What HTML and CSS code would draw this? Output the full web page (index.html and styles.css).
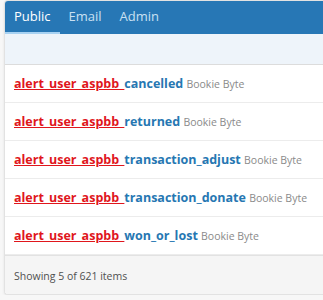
FILE: index.html
```html
<!DOCTYPE html>
<html lang="en">
<head>
    <meta charset="UTF-8">
    <title>Alerts</title>
    <link rel="stylesheet" href="styles.css">
</head>
<body>
    <div class="panel">
        <div class="tabs">
            <span class="tab active">Public</span>
            <span class="tab">Email</span>
            <span class="tab">Admin</span>
        </div>
        <div class="filter-bar"></div>
        <div class="rows">
            <div class="row"><span class="prefix">alert_user_aspbb_</span><span class="suffix">cancelled</span> <span class="owner">Bookie Byte</span></div>
            <div class="row"><span class="prefix">alert_user_aspbb_</span><span class="suffix">returned</span> <span class="owner">Bookie Byte</span></div>
            <div class="row"><span class="prefix">alert_user_aspbb_</span><span class="suffix">transaction_adjust</span> <span class="owner">Bookie Byte</span></div>
            <div class="row"><span class="prefix">alert_user_aspbb_</span><span class="suffix">transaction_donate</span> <span class="owner">Bookie Byte</span></div>
            <div class="row"><span class="prefix">alert_user_aspbb_</span><span class="suffix">won_or_lost</span> <span class="owner">Bookie Byte</span></div>
        </div>
        <div class="footer">Showing 5 of 621 items</div>
    </div>
</body>
</html>
```

FILE: styles.css
```css
* {
    margin: 0;
    padding: 0;
    box-sizing: border-box;
}

body {
    background-color: #f7f7f7;
    font-family: "Open Sans", Arial, sans-serif;
    overflow: hidden;
    padding-left: 4px;
}

/* the panel runs on past the right edge of the window */
.panel {
    width: 319px;
    background-color: #ffffff;
    border: 1px solid #e2e2e2;
    border-right: none;
    border-radius: 4px 0 0 4px;
    box-shadow: 0 1px 3px rgba(0, 0, 0, 0.08);
    overflow: hidden;
}

.tabs {
    display: flex;
    height: 33px;
    background-color: #2777b5;
}

.tab {
    padding: 0 9px;
    line-height: 31px;
    font-size: 13px;
    color: #c9e0f2;
    border-bottom: 2px solid transparent;
}

.tab.active {
    color: #ffffff;
    border-bottom-color: #a8d2f2;
}

.filter-bar {
    height: 31px;
    background-color: #eef4fa;
    border-bottom: 1px solid #dcdcdc;
}

.row {
    height: 38px;
    line-height: 37px;
    padding-left: 9px;
    border-bottom: 1px solid #ececec;
    font-size: 12.5px;
    font-weight: bold;
    white-space: nowrap;
}

.prefix {
    color: #e0161c;
    text-decoration: underline;
}

.suffix {
    color: #2677b2;
}

.owner {
    font-size: 10.5px;
    font-weight: normal;
    color: #8a8a8a;
}

.footer {
    height: 39px;
    line-height: 40px;
    padding-left: 9px;
    background-color: #f5f5f5;
    border-top: 1px solid #e2e2e2;
    font-size: 10.5px;
    color: #505050;
}
```
